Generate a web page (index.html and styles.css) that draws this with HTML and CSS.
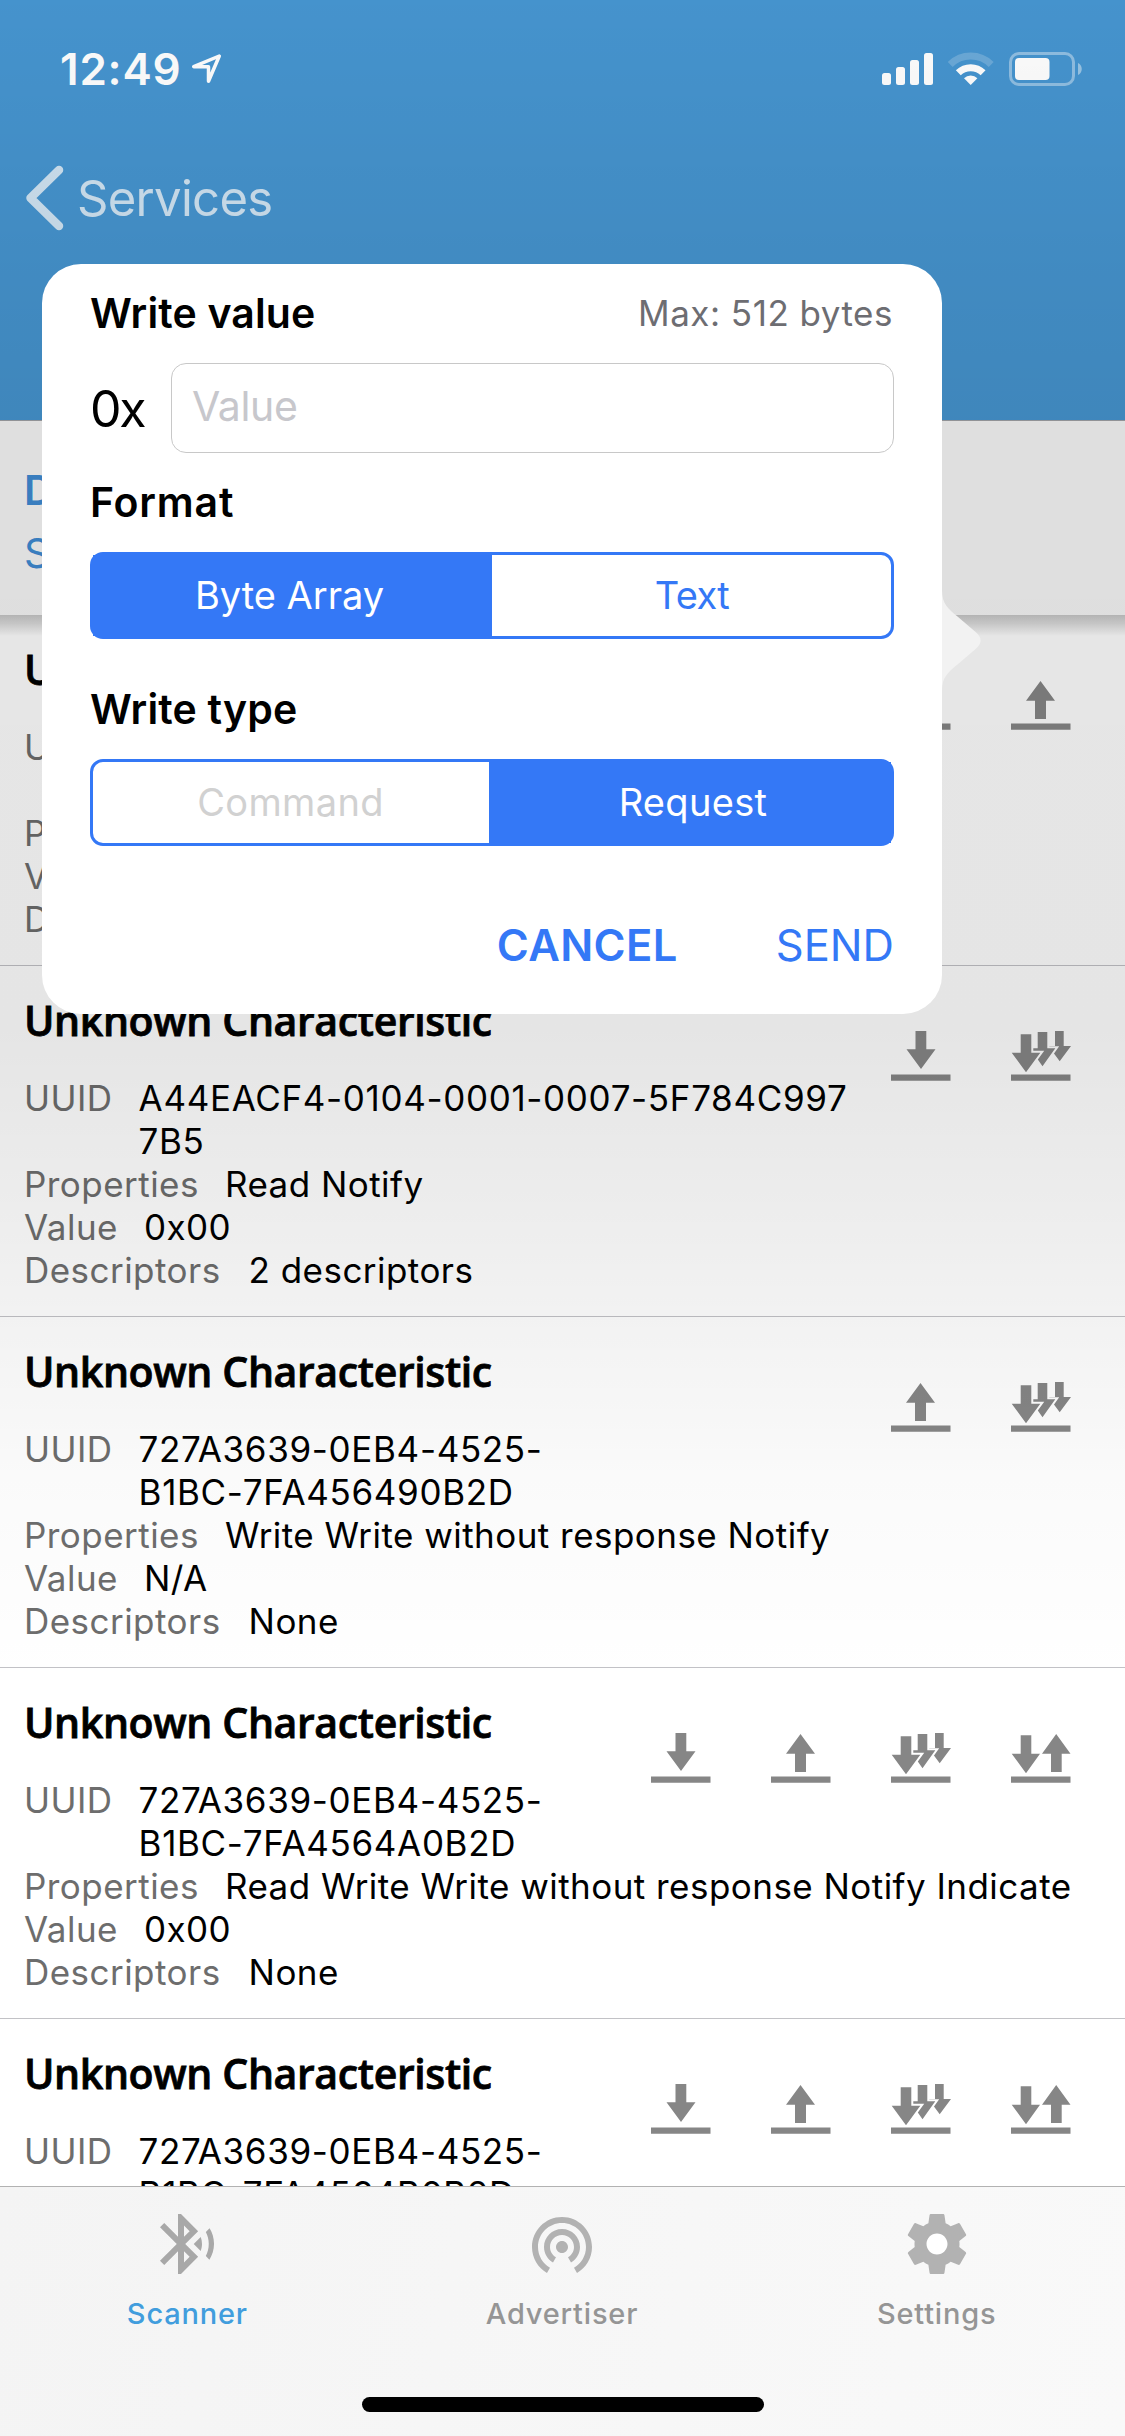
FILE: index.html
```html
<!DOCTYPE html>
<html lang="en">
<head>
<meta charset="utf-8">
<title>Characteristics</title>
<link rel="stylesheet" href="styles.css">
</head>
<body>
<svg class="symbols" aria-hidden="true">
  <defs>
    <mask id="behind-first" maskUnits="userSpaceOnUse" x="0" y="0" width="60" height="50">
      <rect width="60" height="50" fill="#fff"/>
      <path d="M9.7 3.3h10.6v18.4h9L15 41.3.7 21.7h9z" fill="#000" stroke="#000" stroke-width="4"/>
    </mask>
    <mask id="behind-second" maskUnits="userSpaceOnUse" x="0" y="0" width="60" height="50">
      <rect width="60" height="50" fill="#fff"/>
      <path d="M26.7 1h9.6v16.3h8L31.5 35.3 19 17.3h7.7z" fill="#000" stroke="#000" stroke-width="4"/>
    </mask>
    <symbol id="read" viewBox="0 0 60 50">
      <path d="M24.5 0h10.8v18.2h9.2L30 38 15.5 18.2h9zM0 43.5h59.5v6.2H0z"/>
    </symbol>
    <symbol id="write" viewBox="0 0 60 50">
      <path d="M29.5 1L44 20.7h-9V39H24V20.7h-9zM0 43.5h59.5v6.2H0z"/>
    </symbol>
    <symbol id="notify" viewBox="0 0 60 50">
      <path d="M9.7 3.3h10.6v18.4h9L15 41.3.7 21.7h9zM0 43.5h59.5v6.2H0z"/>
      <path mask="url(#behind-first)" d="M26.7 1h9.6v16.3h8L31.5 35.3 19 17.3h7.7z"/>
      <path mask="url(#behind-second)" d="M44 0h8.7v15H60L48.7 30.3 37.4 15H44z"/>
    </symbol>
    <symbol id="indicate" viewBox="0 0 60 50">
      <path d="M9.7 2.3h10.6v18.4H29L15 40.3.7 20.7h9zM45.2 1l14.3 19.7h-8.8V39H40V20.7h-9zM0 43.5h59.5v6.2H0z"/>
    </symbol>
  </defs>
</svg>

<div class="screen">
  <header class="header">
    <div class="status">
      <span class="time">12:49</span>
      <svg class="location" width="34" height="34" viewBox="0 0 34 34"><path d="M29.300 4L3.700 14.700h14.800v14.600z"/></svg>
      <div class="indicators">
        <svg width="51" height="33" viewBox="0 0 51 33" fill="#fff">
          <rect y="20" width="9" height="12" rx="2.500"/><rect x="14" y="14" width="9" height="18" rx="2.500"/><rect x="28" y="7" width="9" height="25" rx="2.500"/><rect x="42" y="0" width="9" height="32" rx="2.500"/>
        </svg>
        <svg class="wifi" width="46" height="34" viewBox="0 0 46 34">
          <path class="faint" d="M2.200 12.500a29 29 0 0 1 41 0"/>
          <path d="M10.300 20.800a17.800 17.800 0 0 1 24.800 0"/>
          <path class="dot" d="M22.700 33L16 26.200a9.700 9.700 0 0 1 13.400 0z"/>
        </svg>
        <svg width="74" height="34" viewBox="0 0 74 34" fill="#fff">
          <rect x="1.500" y="1.500" width="63" height="31" rx="8.500" fill="none" stroke="#fff" stroke-opacity=".4" stroke-width="3"/>
          <rect x="6" y="6" width="34.500" height="22" rx="4"/>
          <path d="M69 11c5 2 5 10 0 12z" opacity=".45"/>
        </svg>
      </div>
    </div>
    <nav class="nav">
      <svg width="42" height="66" viewBox="0 0 42 66"><path d="M34 5L5.500 33 34 61"/></svg>
      <span>Services</span>
    </nav>
  </header>

  <section class="service">
    <h1>D</h1>
    <p>S</p>
  </section>

  <main class="list">
    <article class="cell">
      <div class="top">
        <div>
          <h2>Unknown Characteristic</h2>
          <div class="row"><span>UUID</span></div>
        </div>
        <div class="actions"><svg><use href="#read"/></svg><svg><use href="#write"/></svg></div>
      </div>
      <div class="row second-line"><span>Properties</span></div>
      <div class="row"><span>Value</span></div>
      <div class="row"><span>Descriptors</span></div>
    </article>

    <article class="cell">
      <div class="top">
        <div>
          <h2>Unknown Characteristic</h2>
          <div class="row"><span>UUID</span><b class="uuid">A44EACF4-0104-0001-0007-5F784C997<br>7B5</b></div>
        </div>
        <div class="actions"><svg><use href="#read"/></svg><svg><use href="#notify"/></svg></div>
      </div>
      <div class="row"><span>Properties</span><b>Read Notify</b></div>
      <div class="row"><span>Value</span><b>0x00</b></div>
      <div class="row descriptors"><span>Descriptors</span><b>2 descriptors</b></div>
    </article>

    <article class="cell">
      <div class="top">
        <div>
          <h2>Unknown Characteristic</h2>
          <div class="row"><span>UUID</span><b class="uuid">727A3639-0EB4-4525-<br>B1BC-7FA456490B2D</b></div>
        </div>
        <div class="actions"><svg><use href="#write"/></svg><svg><use href="#notify"/></svg></div>
      </div>
      <div class="row"><span>Properties</span><b>Write Write without response Notify</b></div>
      <div class="row"><span>Value</span><b>N/A</b></div>
      <div class="row descriptors"><span>Descriptors</span><b>None</b></div>
    </article>

    <article class="cell">
      <div class="top">
        <div>
          <h2>Unknown Characteristic</h2>
          <div class="row"><span>UUID</span><b class="uuid">727A3639-0EB4-4525-<br>B1BC-7FA4564A0B2D</b></div>
        </div>
        <div class="actions"><svg><use href="#read"/></svg><svg><use href="#write"/></svg><svg><use href="#notify"/></svg><svg><use href="#indicate"/></svg></div>
      </div>
      <div class="row"><span>Properties</span><b>Read Write Write without response Notify Indicate</b></div>
      <div class="row"><span>Value</span><b>0x00</b></div>
      <div class="row descriptors"><span>Descriptors</span><b>None</b></div>
    </article>

    <article class="cell">
      <div class="top">
        <div>
          <h2>Unknown Characteristic</h2>
          <div class="row"><span>UUID</span><b class="uuid">727A3639-0EB4-4525-<br>B1BC-7FA4564B0B2D</b></div>
        </div>
        <div class="actions"><svg><use href="#read"/></svg><svg><use href="#write"/></svg><svg><use href="#notify"/></svg><svg><use href="#indicate"/></svg></div>
      </div>
    </article>
  </main>

  <footer class="tabbar">
    <div class="tabs">
      <div class="tab active">
        <svg viewBox="0 0 24 24"><path d="M14.240 12.010l2.320 2.320c.28-.72.44-1.510.44-2.330 0-.82-.16-1.590-.43-2.310l-2.330 2.320zm5.290-5.300l-1.260 1.260c.63 1.210.98 2.570.98 4.020s-.36 2.820-.98 4.020l1.200 1.200c.97-1.540 1.540-3.360 1.540-5.310-.01-1.890-.55-3.670-1.480-5.190zm-3.820 1L10 2H9v7.590L4.410 5 3 6.410 8.590 12 3 17.590 4.410 19 9 14.410V22h1l5.710-5.710-4.300-4.290 4.300-4.290zM11 5.830l1.880 1.880L11 9.590V5.830zm1.880 10.460L11 18.170v-3.760l1.880 1.880z"/></svg>
        <span>Scanner</span>
      </div>
      <div class="tab">
        <svg viewBox="0 0 24 24"><path d="M12 11c-1.100 0-2 .9-2 2s.9 2 2 2 2-.9 2-2-.9-2-2-2zm6 2c0-3.310-2.690-6-6-6s-6 2.690-6 6c0 2.220 1.210 4.150 3 5.190l1-1.740c-1.190-.7-2-1.970-2-3.450 0-2.210 1.790-4 4-4s4 1.790 4 4c0 1.480-.81 2.750-2 3.450l1 1.740c1.790-1.040 3-2.970 3-5.190zM12 3C6.480 3 2 7.480 2 13c0 3.700 2.010 6.920 4.990 8.650l1-1.730C5.610 18.530 4 15.960 4 13c0-4.420 3.580-8 8-8s8 3.580 8 8c0 2.960-1.610 5.530-4 6.920l1 1.730c2.990-1.730 5-4.950 5-8.650 0-5.520-4.480-10-10-10z"/></svg>
        <span>Advertiser</span>
      </div>
      <div class="tab">
        <svg viewBox="0 0 24 24"><circle cx="12" cy="12" r="4" fill="#fff"/><path d="M19.430 12.980c.04-.32.07-.64.07-.98s-.03-.66-.07-.98l2.110-1.650c.19-.15.24-.42.12-.64l-2-3.460c-.12-.22-.39-.3-.61-.22l-2.490 1c-.52-.4-1.080-.73-1.690-.98l-.38-2.650C14.460 2.180 14.250 2 14 2h-4c-.25 0-.46.18-.49.42l-.38 2.650c-.61.25-1.170.59-1.690.98l-2.490-1c-.23-.09-.49 0-.61.22l-2 3.460c-.13.22-.07.49.12.64l2.110 1.650c-.04.32-.07.65-.07.98s.03.66.07.98l-2.110 1.650c-.19.15-.24.42-.12.64l2 3.460c.12.22.39.3.61.22l2.490-1c.52.4 1.080.73 1.690.98l.38 2.650c.03.24.24.42.49.42h4c.25 0 .46-.18.49-.42l.38-2.650c.61-.25 1.170-.59 1.690-.98l2.490 1c.23.09.49 0 .61-.22l2-3.460c.12-.22.07-.49-.12-.64l-2.110-1.650zM12 15.500c-1.930 0-3.500-1.570-3.500-3.500s1.570-3.500 3.500-3.500 3.500 1.570 3.500 3.500-1.570 3.500-3.500 3.500z"/></svg>
        <span>Settings</span>
      </div>
    </div>
    <div class="home"></div>
  </footer>

  <div class="backdrop"></div>

  <div class="popover">
    <svg class="arrow" width="40" height="101" viewBox="0 0 40 101"><path d="M0 0C0 14 6 18.500 15.500 26.500L33 41.500C40.500 47.500 40.500 53.500 33 59.500L15.500 74.500C6 82.500 0 87 0 101z"/></svg>
    <div class="title-row">
      <h3>Write value</h3>
      <span class="max">Max: 512 bytes</span>
    </div>
    <div class="input-row">
      <span class="prefix">0x</span>
      <div class="field">Value</div>
    </div>
    <h3 class="format">Format</h3>
    <div class="segment">
      <span class="on bytes">Byte Array</span>
      <span class="text">Text</span>
    </div>
    <h3 class="type">Write type</h3>
    <div class="segment">
      <span class="off">Command</span>
      <span class="on request">Request</span>
    </div>
    <div class="buttons">
      <span class="cancel">CANCEL</span>
      <span>SEND</span>
    </div>
  </div>
</div>
</body>
</html>
```
FILE: styles.css
```css
* { box-sizing: border-box; margin: 0; padding: 0; }
body { font-family: Inter, "Liberation Sans", sans-serif; background: #fff; }
svg { display: block; flex: none; }
.symbols { position: absolute; width: 0; height: 0; }

.screen {
  position: relative;
  display: flex;
  flex-direction: column;
  width: 1125px;
  height: 2436px;
  overflow: hidden;
  background: #fff;
}

/* Header */
.header {
  flex: none;
  height: 421px;
  border-bottom: 1px solid #a0a2a6;
  background: #4695d0;
}
.status { display: flex; height: 132px; padding: 42px 42px 0 60px; }
.time { width: 130px; font-size: 44px; font-weight: 600; line-height: 54px; letter-spacing: .8px; color: #fff; }
.location { margin-top: 10px; fill: none; stroke: #fff; stroke-width: 3.500; stroke-linejoin: round; }
.indicators { display: flex; align-items: flex-start; gap: 15px; margin: 10px 0 0 auto; }
.indicators svg:first-child { margin-top: 1px; }
.wifi { fill: none; stroke: #fff; stroke-width: 7; }
.wifi .faint { opacity: .2; }
.wifi .dot { fill: #fff; stroke: none; }
.nav {
  display: flex;
  gap: 10px;
  padding: 33px 0 0 25px;
  font-size: 49px;
  line-height: 60px;
  letter-spacing: -.7px;
  color: #d0e4f3;
}
.nav svg { fill: none; stroke: #d0e4f3; stroke-width: 8.500; stroke-linecap: round; stroke-linejoin: round; }
.nav span { margin-top: 4px; }

/* Service heading */
.service {
  position: relative;
  flex: none;
  height: 194px;
  padding: 44px 24px 0;
  background: #f7f7f7;
  color: #3f8bd3;
}
.service h1, .service p { font-size: 41px; line-height: 50px; }
.service h1 { font-weight: 600; }
.service p { margin-top: 13px; }
.service::after {
  content: "";
  position: absolute;
  left: 0;
  right: 0;
  top: 100%;
  height: 21px;
  background: linear-gradient(rgba(0, 0, 0, .22), rgba(0, 0, 0, .14) 40%, rgba(0, 0, 0, 0));
}

/* Characteristics */
.list { flex: 1; min-height: 0; overflow: hidden; }
.cell { height: 351px; padding-left: 24px; border-bottom: 1px solid #c2c2c6; }
.top { display: flex; justify-content: space-between; white-space: nowrap; }
.cell h2 {
  margin: 30px 0 33px;
  font: 600 41px/48px "Open Sans", sans-serif;
  letter-spacing: -.360px;
  -webkit-text-stroke: .8px #000;
}
.row { display: flex; gap: 26px; font-size: 35px; line-height: 43px; letter-spacing: .46px; white-space: nowrap; }
.row span { color: #6d6d6d; }
.row b { font-weight: 400; }
.row .uuid { letter-spacing: .66px; }
.descriptors { gap: 28px; }
.second-line { margin-top: 43px; }
.actions { display: flex; gap: 60px; margin: 65px 54px 0 0; }
.actions svg { width: 60px; height: 50px; fill: #868686; }

/* Tab bar */
.tabbar {
  flex: none;
  display: flex;
  flex-direction: column;
  height: 250px;
  border-top: 1px solid #b2b2b2;
  background: linear-gradient(100deg, #f4f4f4, #f9f9f9);
}
.tabs { display: grid; grid-template-columns: repeat(3, 1fr); padding: 21px 1px 0 0; }
.tab { display: flex; flex-direction: column; align-items: center; gap: 16px; font-size: 29px; font-weight: 500; line-height: 36px; letter-spacing: .8px; color: #959595; }
.tab svg { width: 72px; height: 72px; fill: #b2b2b2; }
.tab.active { color: #419ddd; }
.tab.active svg { fill: #a8a8a8; }
.home { width: 402px; height: 15px; margin: auto 361px 24px 362px; border-radius: 8px; background: #000; }

/* Popover */
.backdrop {
  position: absolute;
  inset: 0 0 250px;
  background: linear-gradient(rgba(0, 0, 0, .015), rgba(0, 0, 0, .07) 264px, rgba(0, 0, 0, .097) 420px, rgba(0, 0, 0, .1) 1030px, rgba(0, 0, 0, .08) 1170px, rgba(0, 0, 0, .05) 1317px, rgba(0, 0, 0, .02) 1480px, rgba(0, 0, 0, 0) 1680px);
}
.popover {
  position: absolute;
  left: 42px;
  top: 264px;
  width: 900px;
  height: 750px;
  padding: 24px 48px 0;
  border-radius: 39px;
  background: #fff;
}
.arrow { position: absolute; left: 100%; top: 326px; fill: #f2f2f2; }
.popover h3 { font-size: 41px; font-weight: 600; line-height: 50px; letter-spacing: .15px; }
.title-row { display: flex; justify-content: space-between; line-height: 50px; }
.max { padding-right: 1px; font-size: 35px; letter-spacing: .5px; color: #6d6d72; }
.input-row { display: flex; height: 90px; margin-top: 25px; }
.prefix { width: 81px; font-size: 50px; line-height: 92px; letter-spacing: -2.300px; }
.field { flex: 1; height: 90px; padding-left: 20px; border: 1px solid #c8c8c8; border-radius: 15px; font-size: 41px; line-height: 84px; letter-spacing: -.35px; color: #c7c7cc; }
.popover .format { margin-top: 24px; letter-spacing: .8px; }
.popover .type { margin-top: 45px; }
.segment {
  display: flex;
  height: 87px;
  margin-top: 25px;
  border: 3px solid #3478f6;
  border-radius: 13px;
  background: #fff;
  font-size: 38px;
  line-height: 81px;
  text-align: center;
  color: #3478f6;
}
.segment span { flex: 1; }
.segment .on { flex: 0 0 399px; background: #3478f6; color: #fff; }
.segment .bytes { padding-right: 6px; }
.segment .text { padding-left: 1px; letter-spacing: -.6px; }
.segment .off { padding-right: 1px; letter-spacing: .35px; color: #d1d1d1; }
.segment .request { flex-basis: 402px; padding-left: 6px; letter-spacing: .33px; }
.buttons { display: flex; justify-content: flex-end; gap: 98px; margin-top: 69px; font-size: 43.500px; line-height: 60px; color: #3478f6; }
.cancel { font-weight: 600; letter-spacing: .39px; }
```
